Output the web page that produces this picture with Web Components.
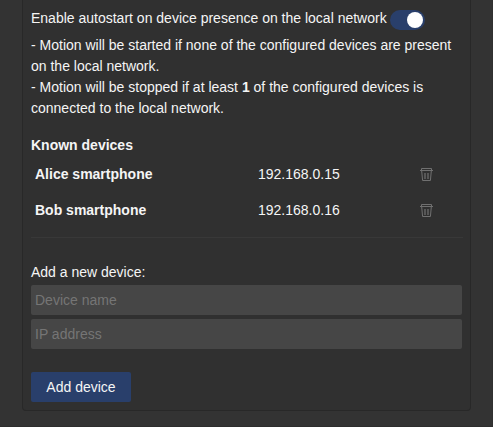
<!DOCTYPE html>
<html lang="en"><head><meta charset="utf-8"><title>Device presence</title>
<style>
html{background:#333}
body{margin:0;width:493px;height:427px;overflow:hidden;box-sizing:border-box;background:#333;border-right:1px solid #303030;border-bottom:1px solid #2d2d2d;color:#f5f5f5;font:14px/21px "Liberation Sans",Arial,sans-serif}
</style></head><body>
<settings-card>
<setting-row>Enable autostart on device presence on the local network<toggle-switch slot="control"></toggle-switch></setting-row>
<info-text>- Motion will be started if none of the configured devices are present<br>on the local network.<br>- Motion will be stopped if at least <b>1</b> of the configured devices is<br>connected to the local network.</info-text>
<device-list>
<known-device ip="192.168.0.15">Alice smartphone</known-device>
<known-device ip="192.168.0.16">Bob smartphone</known-device>
</device-list>
<device-form></device-form>
</settings-card>
<script>
const define=(name,html)=>{
  const t=document.createElement('template');t.innerHTML=html;
  customElements.define(name,class extends HTMLElement{
    constructor(){super();this.attachShadow({mode:'open'}).append(t.content.cloneNode(true));}
    connectedCallback(){const ip=this.shadowRoot.querySelector('.ip');if(ip)ip.textContent=this.getAttribute('ip');}
  });
};
define('settings-card',`<style>:host{display:block;box-sizing:border-box;width:449px;height:411px;margin-left:22px;padding:8px;border:1px solid #282828;border-top:0;border-radius:0 0 4px 4px;background:#303030}</style><slot></slot>`);
define('setting-row',`<style>:host{display:flex;gap:3px;height:27px;align-items:flex-start}span{white-space:nowrap}::slotted(toggle-switch){margin-top:2px}</style><span><slot></slot></span><slot name="control"></slot>`);
define('toggle-switch',`<style>:host{display:flex;box-sizing:border-box;width:35px;height:20px;padding:2px;border-radius:10px;background:#293f6b;justify-content:flex-end}i{width:16px;height:16px;border-radius:50%;background:#fff}</style><i></i>`);
define('info-text',`<style>:host{display:block;white-space:nowrap}</style><slot></slot>`);
define('device-list',`<style>:host{display:block;width:432px;padding-top:16px;height:86px;padding-bottom:16px;border-bottom:1px solid #383838}h2{font:inherit;font-weight:bold;margin:0 0 4px}</style><h2>Known devices</h2><slot></slot>`);
define('known-device',`<style>:host{display:grid;grid-template-columns:223px 161px 15px;height:36px;padding:4px;box-sizing:border-box}b,.ip{line-height:21px}svg{display:block;margin-top:4px}</style><b><slot></slot></b><span class="ip"></span><svg width="15" height="14" viewBox="0 0 15 14" fill="none" stroke="#707070"><path d="M2.5 3V.5h10V3M1 2.5h13M2.7 3l.9 9.5h7.8l.9-9.5"/><path d="M6 5v6M9 5v6" stroke-width="1.4" stroke="#686868"/></svg>`);
define('device-form',`<style>:host{display:block;padding-top:24px}p{margin:0 0 2px}input{display:block;box-sizing:border-box;width:431px;height:30px;border:0;border-radius:2px;background:#464646;color:inherit;font:14px "Liberation Sans",Arial,sans-serif;padding:1px 4px;margin:0 0 4px}input::placeholder{color:#757575}button{display:block;width:100px;height:30px;margin-top:23px;padding:0;border:0;border-radius:2px;background:#293f6b;color:inherit;font:14px "Liberation Sans",Arial,sans-serif}</style><p>Add a new device:</p><input placeholder="Device name"><input placeholder="IP address"><button>Add device</button>`);
</script></body></html>
